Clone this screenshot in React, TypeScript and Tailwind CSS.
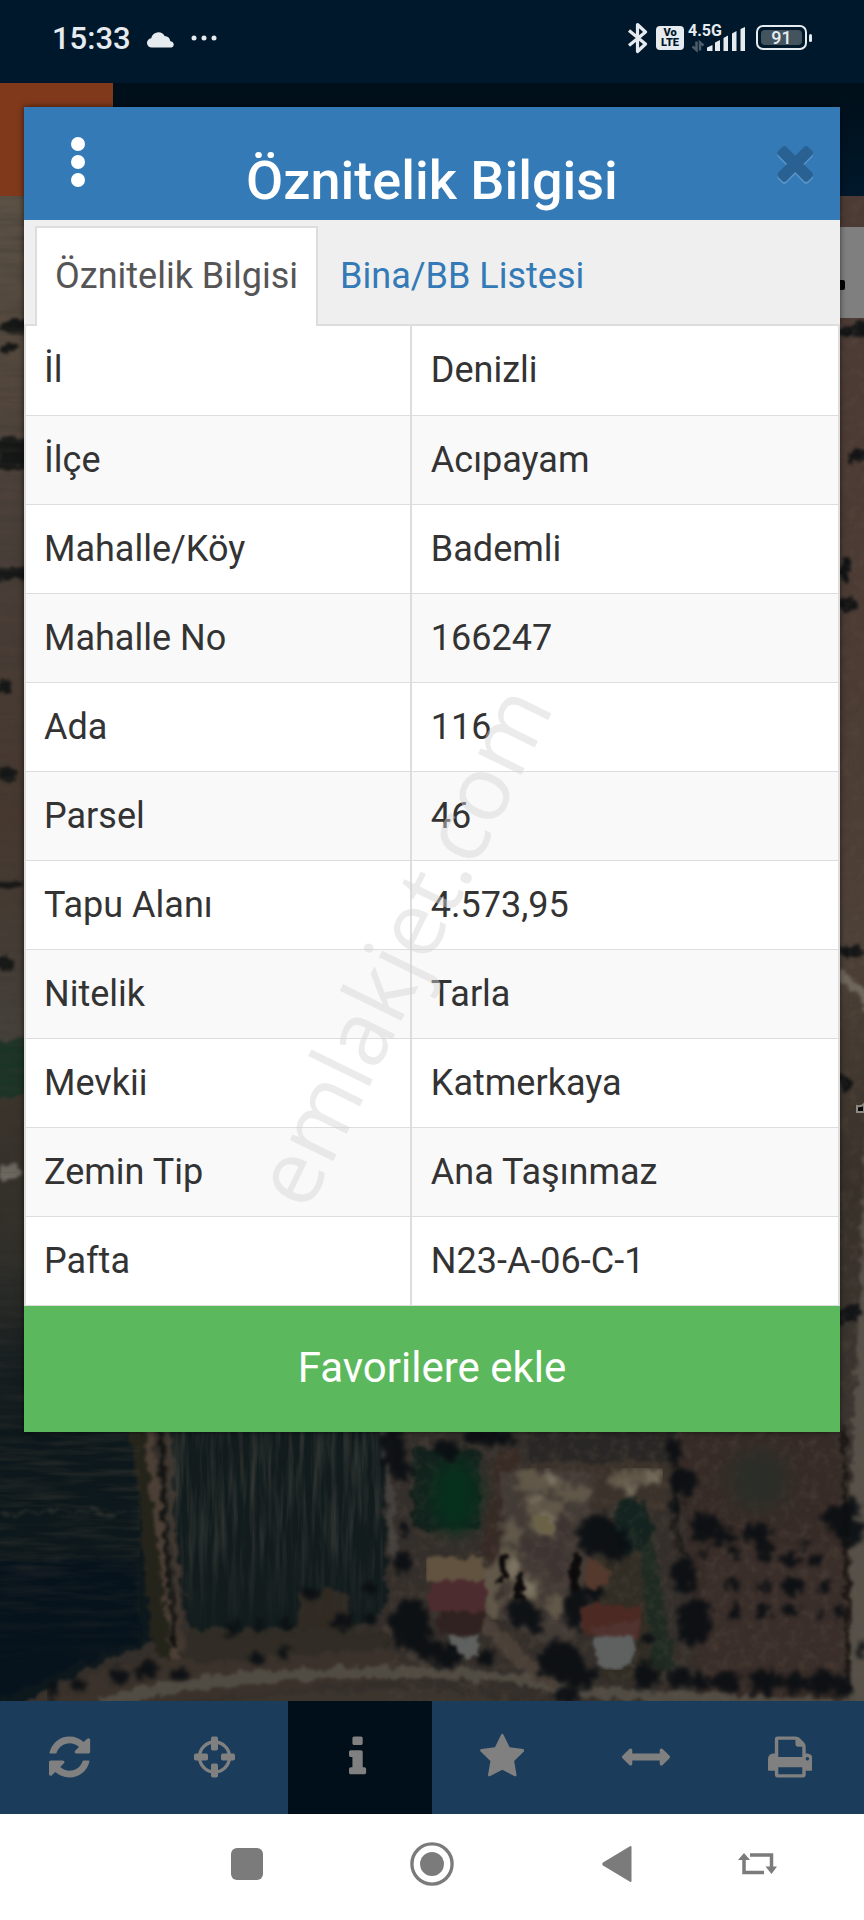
import type { ReactNode } from "react";

const rows: [string, string][] = [
  ["İl", "Denizli"],
  ["İlçe", "Acıpayam"],
  ["Mahalle/Köy", "Bademli"],
  ["Mahalle No", "166247"],
  ["Ada", "116"],
  ["Parsel", "46"],
  ["Tapu Alanı", "4.573,95"],
  ["Nitelik", "Tarla"],
  ["Mevkii", "Katmerkaya"],
  ["Zemin Tip", "Ana Taşınmaz"],
  ["Pafta", "N23-A-06-C-1"],
];

function Glyph({ width, d, className }: { width: number; d: string; className?: string }) {
  return (
    <svg viewBox={`0 0 ${width} 1792`} className={className ?? "h-12"} fill="currentColor" aria-hidden="true">
      <path d={d} />
    </svg>
  );
}

const times =
  "M1298 1322q0 40-28 68l-136 136q-28 28-68 28t-68-28l-294-294-294 294q-28 28-68 28t-68-28l-136-136q-28-28-28-68t28-68l294-294-294-294q-28-28-28-68t28-68l136-136q28-28 68-28t68 28l294 294 294-294q28-28 68-28t68 28l136 136q28 28 28 68t-28 68l-294 294 294 294q28 28 28 68z";

const tools: { label: string; icon: ReactNode; active?: boolean }[] = [
  {
    label: "Yenile",
    icon: (
      <Glyph
        width={1536}
        d="M1511 1056q0 5-1 7-64 268-268 434.5t-478 166.5q-146 0-282.5-55t-243.5-157l-129 129q-19 19-45 19t-45-19-19-45v-448q0-26 19-45t45-19h448q26 0 45 19t19 45-19 45l-137 137q71 66 161 102t187 36q134 0 250-65t186-179q11-17 53-117 8-23 30-23h192q13 0 22.5 9.5t9.5 22.5zm25-800v448q0 26-19 45t-45 19h-448q-26 0-45-19t-19-45 19-45l138-138q-148-137-349-137-134 0-250 65t-186 179q-11 17-53 117-8 23-30 23h-199q-13 0-22.5-9.5t-9.5-22.5v-7q65-268 270-434.5t480-166.5q146 0 284 55.5t245 156.5l130-129q19-19 45-19t45 19 19 45z"
      />
    ),
  },
  {
    label: "Konum",
    icon: (
      <svg viewBox="0 0 41 48" className="h-12" aria-hidden="true">
        <circle cx="20.500" cy="24" r="15" fill="none" stroke="currentColor" strokeWidth="3.400" />
        <g fill="currentColor">
          <rect x="17" y="3.500" width="7" height="14" rx="1.800" />
          <rect x="17" y="30.500" width="7" height="14" rx="1.800" />
          <rect x="0" y="20.500" width="14" height="7" rx="1.800" />
          <rect x="27" y="20.500" width="14" height="7" rx="1.800" />
        </g>
      </svg>
    ),
  },
  {
    label: "Bilgi",
    active: true,
    icon: (
      <Glyph
        width={640}
        d="M640 1344v128q0 26-19 45t-45 19h-512q-26 0-45-19t-19-45v-128q0-26 19-45t45-19h64v-384h-64q-26 0-45-19t-19-45v-128q0-26 19-45t45-19h384q26 0 45 19t19 45v576h64q26 0 45 19t19 45zm-128-1152v192q0 26-19 45t-45 19h-256q-26 0-45-19t-19-45v-192q0-26 19-45t45-19h256q26 0 45 19t19 45z"
      />
    ),
  },
  {
    label: "Favoriler",
    icon: (
      <Glyph
        width={1664}
        d="M1664 647q0 22-26 48l-363 354 86 500q1 7 1 20 0 21-10.5 35.5t-30.5 14.5q-19 0-40-12l-449-236-449 236q-22 12-40 12-21 0-31.5-14.5t-10.5-35.5q0-6 2-20l86-500-364-354q-25-27-25-48 0-37 56-46l502-73 225-455q19-41 49-41t49 41l225 455 502 73q56 9 56 46z"
      />
    ),
  },
  {
    label: "Ölçüm",
    icon: (
      <Glyph
        width={1792}
        d="M1792 896q0 26-19 45l-256 256q-19 19-45 19t-45-19-19-45v-128h-1024v128q0 26-19 45t-45 19-45-19l-256-256q-19-19-19-45t19-45l256-256q19-19 45-19t45 19 19 45v128h1024v-128q0-26 19-45t45-19 45 19l256 256q19 19 19 45z"
      />
    ),
  },
  {
    label: "Yazdır",
    icon: (
      <Glyph
        width={1664}
        d="M384 1536h896v-256h-896v256zm0-640h896v-384h-160q-40 0-68-28t-28-68v-160h-640v640zm1152 64q0-26-19-45t-45-19-45 19-19 45 19 45 45 19 45-19 19-45zm128 0v416q0 13-9.5 22.5t-22.5 9.5h-224v160q0 40-28 68t-68 28h-960q-40 0-68-28t-28-68v-160h-224q-13 0-22.5-9.5t-9.5-22.5v-416q0-79 56.500-135.500t135.500-56.500h64v-544q0-40 28-68t68-28h672q40 0 88 20t76 48l152 152q28 28 48 76t20 88v256h64q79 0 135.500 56.500t56.500 135.500z"
      />
    ),
  },
];

// Tree crowns on the aerial view: centre x, centre y, radius x, radius y.
const trees: number[][] = [
  [393, 1452, 12, 22], [404, 1470, 7, 12], [405, 1530, 6, 6], [402, 1562, 10, 10],
  [310, 1594, 8, 6], [344, 1621, 10, 9], [371, 1587, 6, 7], [373, 1617, 5, 6],
  [231, 1630, 6, 7], [260, 1625, 6, 6], [286, 1625, 6, 6], [257, 1658, 7, 7], [284, 1655, 5, 6],
  [410, 1625, 21, 26], [425, 1648, 12, 12], [448, 1448, 13, 10], [475, 1437, 12, 8], [495, 1437, 14, 10],
  [515, 1443, 4, 4], [597, 1534, 20, 20], [615, 1546, 16, 16], [520, 1612, 13, 14], [535, 1622, 9, 12],
  [575, 1608, 12, 22], [592, 1592, 12, 8], [560, 1660, 22, 20], [580, 1676, 16, 12], [567, 1695, 14, 8],
  [674, 1450, 8, 15], [683, 1482, 14, 14], [675, 1506, 6, 8], [705, 1526, 14, 14], [722, 1536, 12, 9],
  [756, 1534, 13, 10], [765, 1550, 10, 10], [684, 1575, 13, 18], [694, 1622, 17, 24], [706, 1610, 6, 6],
  [704, 1553, 4, 5], [735, 1553, 9, 5], [790, 1560, 9, 6], [816, 1560, 8, 6], [805, 1545, 5, 4],
  [734, 1585, 6, 6], [764, 1587, 7, 6], [792, 1586, 11, 9], [823, 1587, 6, 6],
  [735, 1610, 5, 8], [764, 1610, 7, 7], [791, 1610, 8, 6], [822, 1612, 5, 5], [840, 1611, 5, 8],
  [838, 1518, 16, 14], [852, 1508, 10, 9], [850, 1532, 15, 13], [648, 1638, 7, 7],
  [646, 1676, 13, 14], [680, 1678, 12, 11], [700, 1682, 9, 10], [727, 1682, 16, 10], [765, 1682, 16, 12],
  [795, 1684, 12, 10], [822, 1682, 16, 12], [843, 1687, 8, 10], [445, 1655, 16, 12], [486, 1657, 8, 9],
  [862, 1650, 4, 10], [53, 1692, 6, 8], [78, 1685, 8, 6], [118, 1677, 10, 9], [145, 1670, 12, 9], [178, 1675, 10, 7],
];

const speckles: [string, number[][]][] = [
  ["#615849", [
    [528, 1474, 12, 6], [540, 1484, 24, 8], [536, 1503, 14, 10], [548, 1518, 20, 18], [512, 1532, 9, 12],
    [508, 1565, 14, 16], [526, 1590, 16, 14], [556, 1606, 10, 14], [618, 1480, 9, 8], [640, 1476, 22, 8],
    [575, 1494, 20, 8], [486, 1580, 16, 16], [492, 1606, 9, 14],
  ]],
  ["#7c7363", [
    [550, 1476, 10, 4], [546, 1522, 8, 10], [513, 1567, 6, 10], [529, 1588, 6, 10], [630, 1488, 8, 4], [655, 1474, 8, 6], [536, 1500, 8, 4],
  ]],
  ["#3e3533", [
    [545, 1548, 20, 12], [560, 1570, 14, 14], [562, 1530, 8, 16], [530, 1545, 8, 10],
  ]],
];

function AerialMap() {
  return (
    <svg
      viewBox="0 196 864 1505"
      preserveAspectRatio="xMidYMax slice"
      className="block h-full w-full"
      role="img"
      aria-label="Uydu görüntüsü"
    >
      <defs>
        <filter id="rough" x="0" y="0" width="100%" height="100%" colorInterpolationFilters="sRGB">
          <feTurbulence type="fractalNoise" baseFrequency="0.09" numOctaves="3" seed="4" result="n" />
          <feDisplacementMap in="SourceGraphic" in2="n" scale="14" xChannelSelector="R" yChannelSelector="G" result="d" />
          <feGaussianBlur in="d" stdDeviation="1.600" />
        </filter>
        <filter id="foliage" x="0" y="0" width="100%" height="100%" colorInterpolationFilters="sRGB">
          <feTurbulence type="fractalNoise" baseFrequency="0.14" numOctaves="3" seed="7" result="n" />
          <feDisplacementMap in="SourceGraphic" in2="n" scale="20" xChannelSelector="R" yChannelSelector="G" result="d" />
          <feGaussianBlur in="d" stdDeviation="2.200" />
        </filter>
        <filter id="grain" x="0" y="0" width="100%" height="100%" colorInterpolationFilters="sRGB">
          <feTurbulence type="fractalNoise" baseFrequency="0.1" numOctaves="3" seed="9" />
          <feColorMatrix values="0 0 0 0 0.400  0 0 0 0 0.350  0 0 0 0 0.300  1.600 0 0 0 -0.700" />
        </filter>
        <filter id="furrows" x="0" y="0" width="100%" height="100%" colorInterpolationFilters="sRGB">
          <feTurbulence type="fractalNoise" baseFrequency="0.16 0.014" numOctaves="3" seed="2" />
          <feColorMatrix values="0 0 0 0 0.230  0 0 0 0 0.240  0 0 0 0 0.220  1.600 0 0 0 -0.600" />
        </filter>
        <filter id="streaks" x="0" y="0" width="100%" height="100%" colorInterpolationFilters="sRGB">
          <feTurbulence type="fractalNoise" baseFrequency="0.015 0.13" numOctaves="3" seed="6" />
          <feColorMatrix values="0 0 0 0 0.230  0 0 0 0 0.220  0 0 0 0 0.190  1.600 0 0 0 -0.650" />
        </filter>
        <filter id="soft" x="-50%" y="-50%" width="200%" height="200%" colorInterpolationFilters="sRGB">
          <feGaussianBlur stdDeviation="10" />
        </filter>
        <linearGradient id="west" x1="0" y1="196" x2="0" y2="1431" gradientUnits="userSpaceOnUse">
          <stop offset="0" stopColor="#5b5145" />
          <stop offset="0.100" stopColor="#564a3f" />
          <stop offset="0.280" stopColor="#4a3f39" />
          <stop offset="0.500" stopColor="#46382f" />
          <stop offset="0.680" stopColor="#45403a" />
          <stop offset="0.740" stopColor="#3a332b" />
          <stop offset="0.860" stopColor="#2f2e29" />
          <stop offset="0.960" stopColor="#131c1e" />
        </linearGradient>
        <linearGradient id="east" x1="0" y1="196" x2="0" y2="1431" gradientUnits="userSpaceOnUse">
          <stop offset="0" stopColor="#4c3b35" />
          <stop offset="0.400" stopColor="#4b3b33" />
          <stop offset="0.600" stopColor="#4d4037" />
          <stop offset="0.800" stopColor="#38312a" />
          <stop offset="1" stopColor="#3a352f" />
        </linearGradient>
        <linearGradient id="fade" x1="0" y1="0" x2="0" y2="1">
          <stop offset="0" stopColor="#fff" />
          <stop offset="0.450" stopColor="#fff" />
          <stop offset="1" stopColor="#000" />
        </linearGradient>
        <mask id="fieldFade" maskContentUnits="objectBoundingBox">
          <rect width="1" height="1" fill="url(#fade)" />
        </mask>
      </defs>

      <g filter="url(#rough)">
        <rect x="-10" y="180" width="884" height="1540" fill="#352f2b" />
        <rect x="-10" y="180" width="60" height="1260" fill="url(#west)" />
        <rect x="810" y="180" width="64" height="1260" fill="url(#east)" />

        {/* hedges and shadows west of the dialog */}
        <g fill="#151716">
          <ellipse cx="8" cy="348" rx="8" ry="6" />
          <ellipse cx="16" cy="326" rx="16" ry="8" />
          <ellipse cx="14" cy="448" rx="20" ry="10" />
          <ellipse cx="10" cy="462" rx="16" ry="8" />
          <ellipse cx="14" cy="574" rx="20" ry="7" />
          <ellipse cx="4" cy="686" rx="7" ry="8" />
          <ellipse cx="6" cy="774" rx="10" ry="7" />
          <ellipse cx="8" cy="884" rx="14" ry="5" />
          <ellipse cx="6" cy="964" rx="9" ry="7" />
        </g>
        <path d="M-10 1040H34V1098H-10Z" fill="#1b3426" />
        <ellipse cx="9" cy="1172" rx="12" ry="9" fill="#6e6961" />

        {/* trees and lane east of the dialog */}
        <g fill="#131416">
          <ellipse cx="856" cy="330" rx="22" ry="8" />
          <ellipse cx="858" cy="454" rx="10" ry="9" />
          <ellipse cx="846" cy="570" rx="7" ry="12" />
          <ellipse cx="848" cy="604" rx="8" ry="9" />
          <ellipse cx="852" cy="952" rx="14" ry="6" />
          <ellipse cx="844" cy="1082" rx="8" ry="8" />
          <ellipse cx="848" cy="1314" rx="12" ry="9" />
          <ellipse cx="862" cy="1284" rx="5" ry="6" />
        </g>
        <path d="M838 976Q866 986 874 1020" fill="none" stroke="#70675c" strokeWidth="9" />
        <path d="M866 1130L853 1440 848 1720H874V1080Z" fill="#565048" />

        {/* dark fields */}
        <path d="M-10 1425H140L150 1550 158 1640 90 1668 20 1706H-10Z" fill="#0d181c" />
        <path d="M-10 1560H135L140 1640 60 1672-10 1704Z" fill="#07131c" />
        <path d="M165 1425H385L384 1500 388 1600 370 1625 190 1632 178 1560Z" fill="#121c1d" />
        <path d="M0 1515L60 1510 124 1514" fill="none" stroke="#2c302c" strokeWidth="2" />

        {/* track between the fields */}
        <path d="M140 1425L150 1520 160 1630 172 1660" fill="none" stroke="#24241b" strokeWidth="20" />
        <path d="M148 1425L158 1520 166 1580 176 1660" fill="none" stroke="#4c3f35" strokeWidth="8" />
        <path d="M160 1425L166 1540 174 1650" fill="none" stroke="#141412" strokeWidth="5" />
        <path d="M168 1425L174 1540 182 1650" fill="none" stroke="#433830" strokeWidth="5" />
        <path d="M386 1430L390 1500 394 1560" fill="none" stroke="#45413e" strokeWidth="8" />
        <path d="M300 1590H350V1640H296Z" fill="#302a23" />
        <path d="M186 1630H390V1660L180 1672Z" fill="#312d26" />

        {/* farmyard */}
        <path d="M412 1450H480V1530H412Z" fill="#13211d" />
        <path d="M496 1450H520V1540L500 1580 482 1555Z" fill="#382b26" />
        <path d="M525 1425H675V1466H530Z" fill="#292725" />
        <path d="M522 1462H672V1510H520Z" fill="#3b322b" />
        <path d="M500 1470H590V1620L560 1650 500 1620Z" fill="#433b36" />
        <path d="M600 1552H650L660 1680H600Z" fill="#312d25" />
        <path d="M620 1500L650 1505 658 1570 676 1670H652L640 1560Z" fill="#1f2b22" />
        <ellipse cx="632" cy="1525" rx="20" ry="28" fill="#14231f" />
        <path d="M676 1425H840V1700H700Z" fill="#362b27" />
        <path d="M706 1545H845V1670H700Z" fill="#3a2e2a" />
        <path d="M676 1460V1540L690 1560" fill="none" stroke="#1f1c1a" strokeWidth="6" />
        <path d="M844 1425L848 1690" fill="none" stroke="#1d1815" strokeWidth="5" />
      </g>

      <g filter="url(#foliage)">
        {speckles.map(([fill, list]) => (
          <g key={fill} fill={fill}>
            {list.map(([x, y, rx, ry], i) => (
              <ellipse key={i} cx={x} cy={y} rx={rx} ry={ry} />
            ))}
          </g>
        ))}
      </g>

      {/* roads */}
      <g filter="url(#rough)">
        <path d="M20 1706Q90 1672 160 1655L200 1662 390 1650 420 1675 300 1690 100 1710Z" fill="#3a322b" />
        <path d="M100 1702Q230 1672 380 1672T560 1690L720 1700 864 1706" fill="none" stroke="#514c43" strokeWidth="12" />
        <path d="M180 1710Q300 1684 440 1690L560 1710Z" fill="#3b352e" />
        <path d="M482 1612L545 1670 560 1690 530 1680 475 1625Z" fill="#4a4038" />
        <path d="M385 1625L430 1670" stroke="#433b34" strokeWidth="8" />
      </g>

      <rect x="165" y="1425" width="218" height="215" filter="url(#furrows)" mask="url(#fieldFade)" />
      <rect x="0" y="1431" width="140" height="240" filter="url(#streaks)" mask="url(#fieldFade)" opacity="0.700" />
      <rect x="0" y="196" width="40" height="1235" filter="url(#streaks)" opacity="0.500" />
      <rect x="390" y="1431" width="474" height="270" filter="url(#grain)" opacity="0.350" />
      <rect x="836" y="196" width="28" height="1235" filter="url(#grain)" opacity="0.300" />
      <ellipse cx="758" cy="1480" rx="30" ry="30" fill="#2b2e28" filter="url(#soft)" />
      <ellipse cx="455" cy="1496" rx="24" ry="38" fill="#06301c" filter="url(#soft)" />

      {/* tree crowns */}
      <g filter="url(#foliage)" fill="#0a0e12" opacity="0.900">
        {trees.map(([x, y, rx, ry], i) => (
          <ellipse key={i} cx={x} cy={y} rx={rx} ry={ry} />
        ))}
      </g>

      {/* roofs */}
      <g filter="url(#rough)">
        <path d="M426 1558H482V1580H426Z" fill="#615340" />
        <path d="M430 1580H485V1612H430Z" fill="#4d2c30" />
        <path d="M438 1611H484V1634H440Z" fill="#302220" />
        <path d="M446 1636H478V1656H462Z" fill="#5f6161" />
        <path d="M500 1556H508V1582H500ZM515 1575H523V1600H515ZM572 1552H579V1590H572Z" fill="#0d0b0b" />
        <path d="M586 1556L609 1570 608 1586 586 1588Z" fill="#54392d" />
        <path d="M582 1606H642V1636H582Z" fill="#4c2a23" />
        <path d="M592 1626L640 1620V1638L600 1642Z" fill="#50332f" />
        <path d="M595 1638H634V1666L610 1670 595 1662Z" fill="#5f6161" />
        <path d="M532 1518L548 1514 554 1532 540 1535Z" fill="#6a6146" />
      </g>

      {/* map control and label partly covered by the dialog */}
      <rect x="780" y="227" width="84" height="91" fill="#7f7f7f" />
      <rect x="832" y="280" width="13" height="10" rx="2" fill="#050505" />
      <path d="M857 1112V1106Q862 1107 864 1104V1112Z" fill="#050505" stroke="#8d8a84" strokeWidth="2" />
    </svg>
  );
}

function StatusBar() {
  return (
    <header className="flex h-[83px] items-center justify-between bg-[#00182b] px-[52px] pb-1 text-[#e6ebf0]">
      <div className="flex h-10 items-center">
        <span className="text-[31px] font-medium">15:33</span>
        <svg viewBox="0 0 28 16" className="ml-4 h-4 w-7" fill="currentColor" aria-hidden="true">
          <path d="M5 15.500a4.600 4.600 0 0 1-.8-9.200A7.200 7.200 0 0 1 17.600 4a6 6 0 0 1 5.700 5.300A3.200 3.200 0 0 1 24.600 15.500Z" />
        </svg>
        <svg viewBox="0 0 26 6" className="mb-1 ml-4 h-[6px] w-[26px]" fill="currentColor" aria-hidden="true">
          <circle cx="3" cy="3" r="2.500" />
          <circle cx="13" cy="3" r="2.500" />
          <circle cx="23" cy="3" r="2.500" />
        </svg>
      </div>
      <div className="flex h-10 items-center pb-1">
        <svg viewBox="0 0 20 32" className="h-8 w-5" fill="none" stroke="currentColor" strokeWidth="3.200" strokeLinejoin="round" aria-hidden="true">
          <path d="M1 8.500 17.500 22 9.500 29.500V2.500L17.500 10 1 23.500" />
        </svg>
        <span className="ml-2 flex h-6 w-7 flex-col items-center justify-center rounded bg-[#e6ebf0] text-[11px] leading-[10px] font-black text-[#00182b]">
          <span>Vo</span>
          <span>LTE</span>
        </span>
        <svg viewBox="0 0 58 32" className="ml-1 h-8 w-[58px] overflow-visible" aria-hidden="true">
          <text x="0" y="14" fill="currentColor" fontSize="16" fontWeight="700">
            4.5G
          </text>
          <path
            d="M19 29V25.500L24.500 23V29ZM27 29V20.500L32 18V29ZM35.500 29V16L40 13.500V29ZM44 29V11.500L48.500 9V29ZM52.500 29V7L57 5V29Z"
            fill="currentColor"
          />
          <path d="M8.500 19.500V28L4.500 24.500M12 28.500V20.500L15.500 23.500" fill="none" stroke="#4c5c69" strokeWidth="2.500" />
        </svg>
        <span className="ml-[10px] flex h-[25px] w-[51px] rounded-[7px] border-2 border-[#e6ebf0] p-[3px]">
          <span className="flex flex-1 items-center justify-center rounded-sm bg-[#44545f] text-[18px] leading-4 font-medium">91</span>
        </span>
        <span className="ml-[2px] h-2 w-[3px] rounded-sm bg-[#e6ebf0]" />
      </div>
    </header>
  );
}

function InfoDialog() {
  return (
    <section
      role="dialog"
      aria-labelledby="dialog-title"
      className="relative z-10 mx-6 mt-6 self-start bg-white shadow-[0_0_6px_rgba(0,0,0,0.6)] [grid-area:1/1]"
    >
      <div className="grid h-[113px] grid-cols-[108px_1fr_108px] bg-[#337ab7] text-white">
        <button type="button" aria-label="Menü" className="flex items-center justify-center pb-1">
          <svg viewBox="0 0 14 50" className="h-[50px] w-[14px]" fill="currentColor" aria-hidden="true">
            <circle cx="7" cy="7" r="7" />
            <circle cx="7" cy="25" r="7" />
            <circle cx="7" cy="43" r="7" />
          </svg>
        </button>
        <h1 id="dialog-title" className="self-end pb-[9px] text-center text-[54px] leading-[60px] font-medium">
          Öznitelik Bilgisi
        </h1>
        <button type="button" aria-label="Kapat" className="flex items-center justify-end pr-6 pb-1 text-[#296292] drop-shadow-[0_2px_0_#5b95c9]">
          <Glyph width={1408} d={times} className="h-[54px]" />
        </button>
      </div>

      <nav className="flex h-[106px] items-end border-b-2 border-[#ddd] bg-[#efefef] pl-[11px]">
        <a
          href="#oznitelik"
          aria-current="page"
          className="-mb-[2px] flex h-[100px] items-center border-2 border-b-0 border-[#ddd] bg-white px-[18px] pb-[2px] text-[36px] text-[#555]"
        >
          Öznitelik Bilgisi
        </a>
        <a
          href="#bina"
          className="-mb-[2px] flex h-[100px] items-center border-2 border-b-0 border-transparent px-5 pb-[2px] text-[36px] text-[#337ab7]"
        >
          Bina/BB Listesi
        </a>
      </nav>

      <table className="w-full table-fixed border-collapse text-left text-[36px] text-[#333]">
        <colgroup>
          <col className="w-[47.4%]" />
          <col />
        </colgroup>
        <tbody>
          {rows.map(([label, value]) => (
            <tr key={label} className="h-[89px] even:bg-[#f9f9f9]">
              <th scope="row" className="border-x-2 border-b border-[#ddd] px-[18px] py-0 font-normal">
                {label}
              </th>
              <td className="border-x-2 border-b border-[#ddd] px-[19px] py-0">{value}</td>
            </tr>
          ))}
        </tbody>
      </table>

      <button type="button" className="flex h-[126px] w-full items-center justify-center bg-[#5cb85c] pb-[2px] text-[42px] text-white">
        Favorilere ekle
      </button>

      <span
        className="pointer-events-none absolute top-[838px] left-[376px] -translate-x-1/2 -translate-y-1/2 -rotate-[64deg] text-[90px] whitespace-nowrap text-[rgba(212,212,212,0.46)]"
        style={{ fontFamily: '"Open Sans", "Noto Sans", sans-serif' }}
      >
        emlakjet.com
      </span>
    </section>
  );
}

function SystemNav() {
  return (
    <nav className="flex h-[106px] items-center bg-white pb-[6px] pl-[154px] text-[#7b7b7b]">
      <div className="grid w-[555px] grid-cols-3 justify-items-center">
        <button type="button" aria-label="Son uygulamalar" className="flex w-12 items-center justify-center">
          <span className="h-8 w-8 rounded-md bg-[#7b7b7b]" />
        </button>
        <button type="button" aria-label="Ana ekran" className="flex w-12 items-center justify-center">
          <svg viewBox="0 0 46 46" className="h-11 w-11" aria-hidden="true">
            <circle cx="23" cy="23" r="21" fill="none" stroke="currentColor" strokeWidth="3.500" />
            <circle cx="23" cy="23" r="12.500" fill="currentColor" />
          </svg>
        </button>
        <button type="button" aria-label="Geri" className="flex w-12 items-center justify-center">
          <svg viewBox="0 0 30 38" className="h-[38px] w-[30px]" fill="currentColor" aria-hidden="true">
            <path d="M1 17.500 28 1.200Q29.500.5 29.500 2V36Q29.500 37.500 28 36.800L1 20.500Q-.5 19 1 17.500Z" />
          </svg>
        </button>
      </div>
      <button type="button" aria-label="Ekranı döndür" className="mr-[87px] ml-auto">
        <svg viewBox="0 0 39 24" className="h-6 w-[39px]" fill="none" stroke="currentColor" strokeWidth="3.500" aria-hidden="true">
          <path d="M26 20.500H6V5M12 3H33.500V18" />
          <path d="M0 8 6 1 12 8ZM27.500 14.500 33.500 22 39 14.500Z" fill="currentColor" stroke="none" />
        </svg>
      </button>
    </nav>
  );
}

export default function App() {
  return (
    <div
      className="flex min-h-screen flex-col"
      style={{ fontFamily: 'Roboto, "Liberation Sans", sans-serif' }}
    >
      <StatusBar />
      <main className="grid flex-1 grid-cols-1">
        <div className="flex min-w-0 flex-col [grid-area:1/1]">
          <div className="flex h-[113px] bg-gradient-to-b from-[#000f19] to-[#00182b]">
            <span className="w-[113px] bg-[#80391b]" />
          </div>
          <div className="min-h-0 flex-1 basis-0 overflow-hidden">
            <AerialMap />
          </div>
          <div className="grid h-[113px] grid-cols-6 bg-[#1b3d5b] text-[#808080]">
            {tools.map((tool) => (
              <button
                key={tool.label}
                type="button"
                aria-label={tool.label}
                aria-pressed={tool.active ?? false}
                className={
                  tool.active
                    ? "flex items-center justify-center bg-[#000f19] pr-1 pb-[2px]"
                    : "flex items-center justify-center pr-1 pb-[2px]"
                }
              >
                {tool.icon}
              </button>
            ))}
          </div>
        </div>
        <InfoDialog />
      </main>
      <SystemNav />
    </div>
  );
}
